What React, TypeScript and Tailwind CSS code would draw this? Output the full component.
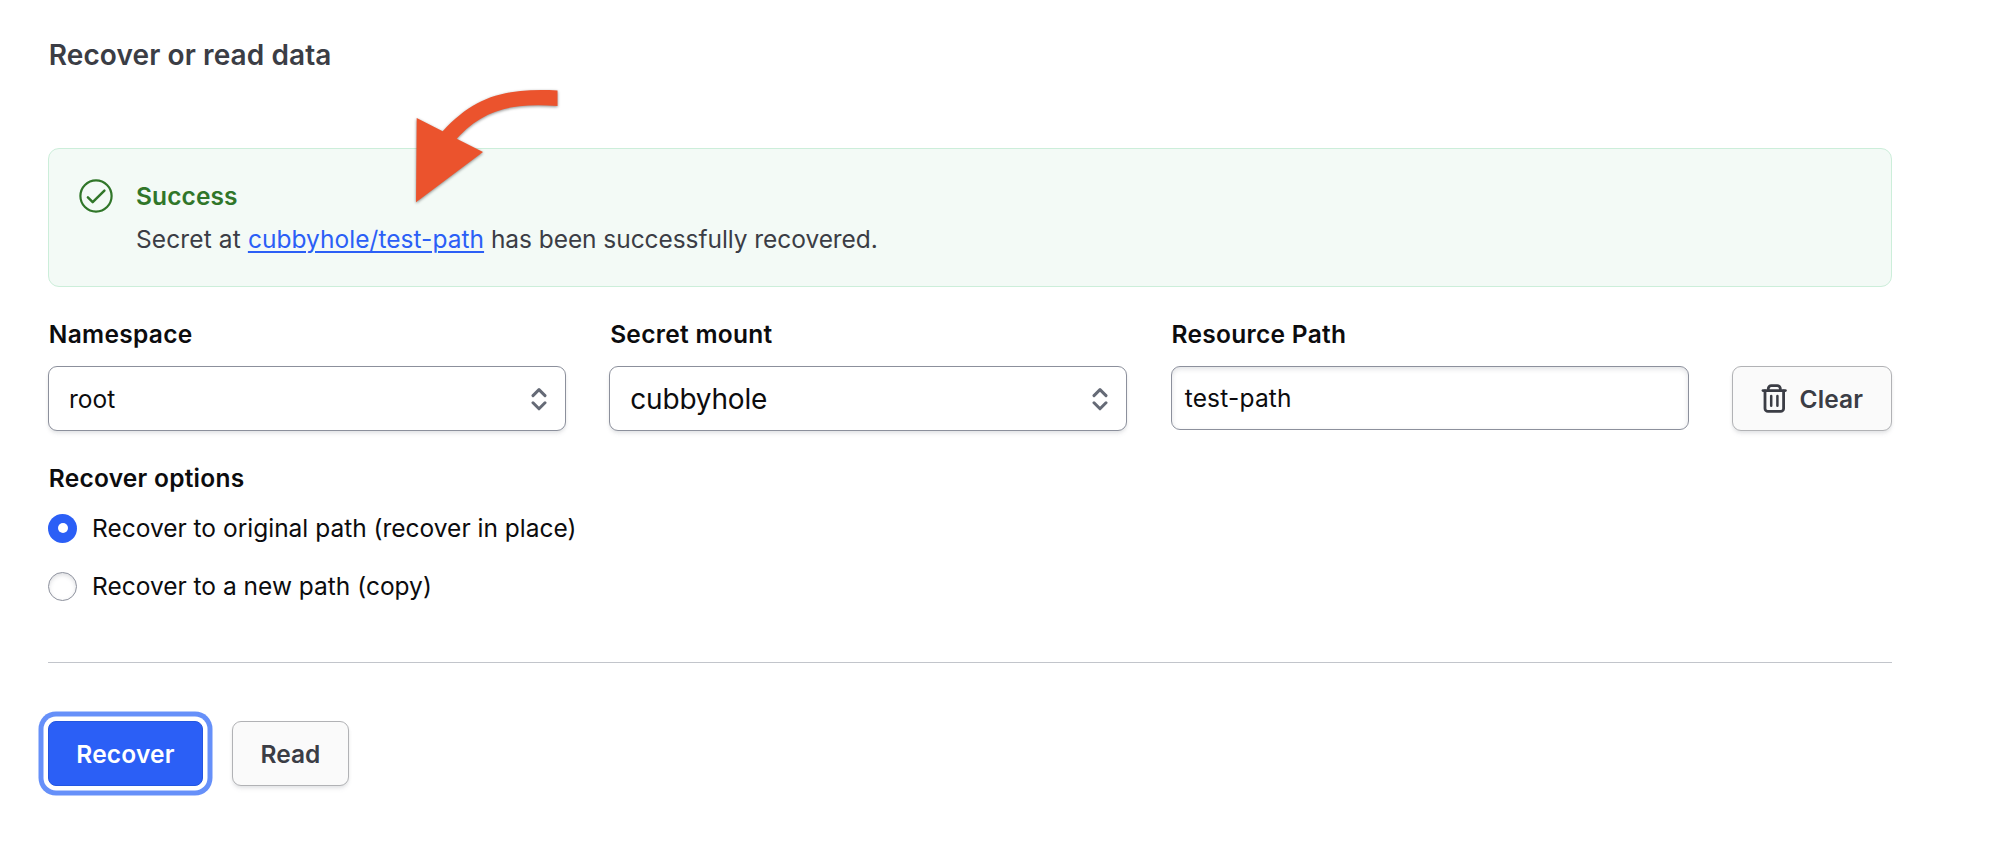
import type { ReactNode } from "react";

function CheckCircleIcon() {
  return (
    <svg width="34" height="34" viewBox="0 0 34 34" fill="none" stroke="#307629" strokeWidth="2.2" className="shrink-0">
      <circle cx="17" cy="17" r="15.6" />
      <path d="M8.9 18.4l4.8 4.7L25.4 11.6" strokeWidth="2.5" strokeLinecap="round" strokeLinejoin="round" />
    </svg>
  );
}

function CaretIcon() {
  return (
    <svg width="16" height="24" viewBox="0 0 16 24" fill="none" stroke="#656a76" strokeWidth="3" strokeLinecap="round" strokeLinejoin="round" className="shrink-0">
      <path d="M2 8.6L8 2.6l6 6M2 15.8l6 6 6-6" />
    </svg>
  );
}

function TrashIcon() {
  return (
    <svg width="29" height="29" viewBox="0 0 29 29" fill="none" stroke="#3b3d45" strokeWidth="2.8" strokeLinecap="round" strokeLinejoin="round" className="shrink-0">
      <path d="M3 6.6h22.4" />
      <path d="M8.3 6.4V4.6a3 3 0 0 1 3-3h6a3 3 0 0 1 3 3v1.8" />
      <path d="M5 6.8v17.6a3 3 0 0 0 3 3h12.6a3 3 0 0 0 3-3V6.8" />
      <path d="M11.2 12.1v9.6M17.4 12.1v9.6" strokeWidth="2.5" />
    </svg>
  );
}

function PointerArrow() {
  return (
    <svg
      width="180"
      height="130"
      viewBox="0 0 180 130"
      className="pointer-events-none absolute left-[400px] top-[80px] drop-shadow-[0_1.5px_1.5px_rgba(0,0,0,0.45)]"
    >
      <path
        fill="#eb532d"
        d="M157.5 10.5C105 8 75 16 42.7 51.3L16.7 38L16 122.3L83 72L56.7 58.7C84 29 112 23 157.5 26Z"
      />
    </svg>
  );
}

function Field({ label, children }: { label: string; children: ReactNode }) {
  return (
    <div className="flex flex-1 flex-col gap-[15px]">
      <div className="pl-[0.8px] font-semibold tracking-[0.3px] text-[#0c0c0e]">{label}</div>
      {children}
    </div>
  );
}

function Select({ children }: { children: ReactNode }) {
  return (
    <div className="flex h-[65px] items-center justify-between rounded-[9px] border border-[#8c909c] bg-white pl-[20px] pr-[18.5px] text-[#0c0c0e] shadow-[0_2px_3px_rgba(101,106,118,0.12),0_4px_4px_rgba(101,106,118,0.05)]">
      {children}
      <CaretIcon />
    </div>
  );
}

const secondary =
  "flex h-[65px] items-center justify-center rounded-[9px] border border-[#b1b2b5] bg-[#fafafa] font-semibold text-[#3b3d45] shadow-[0_2px_3px_rgba(101,106,118,0.12),0_4px_4px_rgba(101,106,118,0.05)]";

export default function App() {
  return (
    <div className="relative h-[848px] w-[2000px] overflow-hidden bg-white pl-[48px] pr-[108px] pt-[37px] font-['Inter',sans-serif] text-[24.5px] leading-[34px]">
      <h1 className="pl-[0.8px] text-[28px] font-semibold leading-[36px] tracking-[0.1px] text-[#3b3d45]">Recover or read data</h1>

      <div className="mt-[75px] flex h-[139px] gap-[23px] rounded-[11px] border border-[#cceeda] bg-[#f3faf6] pl-[30px] pt-[30px]">
        <CheckCircleIcon />
        <div className="flex flex-col gap-[9px]">
          <div className="font-semibold tracking-[0.1px] text-[#307629]">Success</div>
          <div className="text-[#3b3d45]">
            <span className="tracking-[0.12px]">Secret at </span>
            <a className="tracking-[0.04px] text-[#2b5ff6] underline decoration-2 underline-offset-[3px]">cubbyhole/test-path</a>
            <span className="tracking-[-0.06px]"> has been successfully recovered.</span>
          </div>
        </div>
      </div>

      <div className="mt-[30px] flex gap-[43.33px]">
        <Field label="Namespace">
          <Select>
            <span>root</span>
          </Select>
        </Field>
        <Field label="Secret mount">
          <Select>
            <span className="text-[28px] tracking-[-0.2px]">cubbyhole</span>
          </Select>
        </Field>
        <Field label="Resource Path">
          <div className="flex h-[64px] items-center rounded-[9px] border border-[#8c909c] bg-white pl-[13px] tracking-[0.2px] text-[#0c0c0e] shadow-[inset_0_2px_5px_rgba(101,106,118,0.2)]">
            test-path
          </div>
        </Field>
        <button className={`mt-[49px] w-[160px] gap-[10.5px] pr-px ${secondary}`}>
          <TrashIcon />
          <span className="tracking-[0.1px]">Clear</span>
        </button>
      </div>

      <div className="mt-[30px] pl-[0.8px] font-semibold tracking-[0.25px] text-[#0c0c0e]">Recover options</div>
      <div className="mt-[16px] flex flex-col gap-[24px] text-[#0c0c0e]">
        <label className="flex items-center gap-[15px]">
          <span className="flex size-[29px] items-center justify-center rounded-full bg-[#2b5ff6]">
            <span className="size-[10px] rounded-full bg-white" />
          </span>
          Recover to original path (recover in place)
        </label>
        <label className="flex items-center gap-[15px]">
          <span className="size-[29px] rounded-full border border-[#8c909c] bg-white shadow-[inset_0_2px_4px_rgba(101,106,118,0.22)]" />
          Recover to a new path (copy)
        </label>
      </div>

      <div className="mt-[59px] h-px bg-[#c2c5cb]" />

      <div className="mt-[58px] flex gap-[29px]">
        <button className="h-[65px] w-[155px] rounded-[8px] border border-[#2356e0] bg-[#2b5ff6] font-semibold tracking-[0.2px] text-white shadow-[0_0_0_4.5px_#ffffff,0_0_0_9.5px_#6690f9]">
          Recover
        </button>
        <button className={`w-[117px] ${secondary}`}>Read</button>
      </div>
      <PointerArrow />
    </div>
  );
}
